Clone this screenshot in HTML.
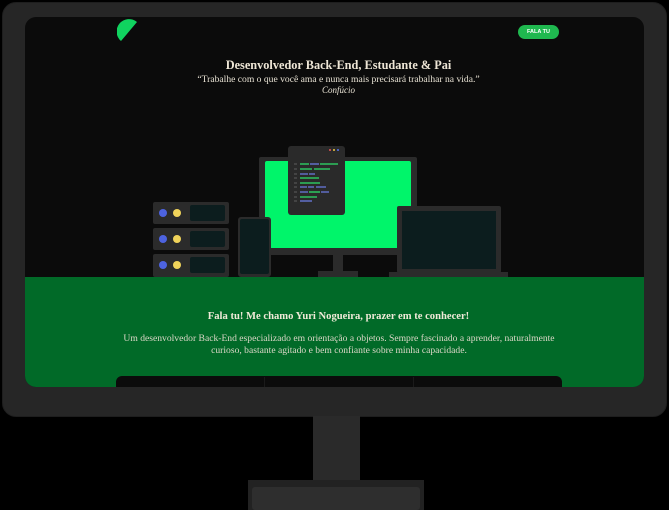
<!DOCTYPE html>
<html><head><meta charset="utf-8"><style>
*{margin:0;padding:0;box-sizing:border-box}
body{width:669px;height:510px;background:#000;position:relative;overflow:hidden;font-family:"Liberation Serif",serif}
.a{position:absolute}
</style></head><body>
<div class="a" style="left:2px;top:2px;width:665px;height:415px;background:#262626;border-radius:14px;border:1px solid #1e1e1e"></div>
<div class="a" style="left:313px;top:416px;width:47px;height:70px;background:#2a2a2a"></div>
<div class="a" style="left:248px;top:480px;width:176px;height:30px;background:#222"></div>
<div class="a" style="left:252px;top:487px;width:168px;height:23px;background:#2e2e2e;border-radius:3px"></div>
<div class="a" style="left:25px;top:17px;width:619px;height:370px;background:#0b0b0b;border-radius:11px;overflow:hidden">
 <div class="a" style="left:0;top:260px;width:619px;height:110px;background:#016a28"></div>
 <svg class="a" style="left:92px;top:2px" width="24" height="24" viewBox="0 0 24 24"><path d="M20 3 A10.5 10.5 0 0 0 4 22 Z" fill="#10d35f"/></svg>
 <div class="a" style="left:493px;top:8px;width:41px;height:14px;background:#1fb84f;border-radius:7px;color:#fff;font:bold 5.5px 'Liberation Sans',sans-serif;text-align:center;line-height:14px">FALA TU</div>
 <div class="a" style="left:0;top:41px;width:627px;text-align:center;color:#eee6d6;font-weight:bold;font-size:12.3px">Desenvolvedor Back-End, Estudante &amp; Pai</div>
 <div class="a" style="left:0;top:57px;width:627px;text-align:center;color:#e8e2d4;font-size:9.6px">“Trabalhe com o que você ama e nunca mais precisará trabalhar na vida.”</div>
 <div class="a" style="left:0;top:68px;width:627px;text-align:center;color:#e8e2d4;font-size:9px;font-style:italic">Confúcio</div>
 <svg class="a" style="left:0;top:0" width="619" height="370">
  <g transform="translate(-25,-17)">
   <rect x="259" y="157" width="158" height="98" rx="2" fill="#2b2b2b"/>
   <rect x="265" y="161" width="146" height="87" rx="2" fill="#00f56a"/>
   <rect x="333" y="255" width="10" height="17" fill="#2b2b2b"/>
   <rect x="318" y="271" width="40" height="6" fill="#2b2b2b"/>
   <rect x="288" y="146" width="57" height="69" rx="3" fill="#2a2a2a"/>
   <circle cx="330" cy="150" r="1" fill="#e55"/><circle cx="334" cy="150" r="1" fill="#ec4"/><circle cx="338" cy="150" r="1" fill="#57e"/>
   <g stroke-width="1.3">
    <path d="M300 164h9M320 164h18" stroke="#2ee06a"/><path d="M310 164h9" stroke="#6a7be0"/>
    <path d="M300 169h12M314 169h16" stroke="#2ee06a"/>
    <path d="M300 174h8M309 174h6" stroke="#6a7be0"/>
    <path d="M300 178h19" stroke="#2ee06a"/>
    <path d="M300 183h20" stroke="#2ee06a"/>
    <path d="M300 187h7M308 187h6M316 187h10" stroke="#6a7be0"/>
    <path d="M300 192h8M321 192h8" stroke="#6a7be0"/><path d="M309 192h11" stroke="#2ee06a"/>
    <path d="M300 197h17" stroke="#2ee06a"/>
    <path d="M300 201h12" stroke="#6a7be0"/>
    <path d="M294 164h3M294 169h3M294 174h3M294 178h3M294 183h3M294 187h3M294 192h3M294 197h3M294 201h3" stroke="#555"/>
   </g>
   <g fill="#2b2b2b">
    <rect x="153" y="202" width="76" height="22" rx="2"/><rect x="153" y="228" width="76" height="22" rx="2"/><rect x="153" y="254" width="76" height="23" rx="2"/>
   </g>
   <g fill="#0c1d1e"><rect x="190" y="205" width="35" height="16" rx="2"/><rect x="190" y="231" width="35" height="16" rx="2"/><rect x="190" y="257" width="35" height="16" rx="2"/></g>
   <g fill="#4d63e0"><circle cx="163" cy="213" r="4"/><circle cx="163" cy="239" r="4"/><circle cx="163" cy="265" r="4"/></g>
   <g fill="#f0d35a"><circle cx="177" cy="213" r="4"/><circle cx="177" cy="239" r="4"/><circle cx="177" cy="265" r="4"/></g>
   <rect x="238" y="217" width="33" height="60" rx="3" fill="#2b2b2b"/>
   <rect x="240" y="219" width="29" height="55" rx="2" fill="#0c1d1e"/>
   <rect x="397" y="206" width="104" height="67" rx="2" fill="#2b2b2b"/>
   <rect x="402" y="211" width="94" height="58" fill="#0c1d1e"/>
   <rect x="389" y="272" width="119" height="5" fill="#2b2b2b"/>
  </g>
 </svg>
 <div class="a" style="left:0;top:294px;width:627px;text-align:center;color:#f0ead8;font-weight:bold;font-size:10.6px">Fala tu! Me chamo Yuri Nogueira, prazer em te conhecer!</div>
 <div class="a" style="left:64px;top:316px;width:500px;text-align:center;color:#ddd8c8;font-size:9.6px;line-height:11.5px">Um desenvolvedor Back-End especializado em orientação a objetos. Sempre fascinado a aprender, naturalmente<br>curioso, bastante agitado e bem confiante sobre minha capacidade.</div>
 <div class="a" style="left:91px;top:359px;width:446px;height:20px;background:#0b0b0b;border-radius:6px"></div>
 <div class="a" style="left:239px;top:360px;width:1px;height:10px;background:#1a1a1a"></div>
 <div class="a" style="left:388px;top:360px;width:1px;height:10px;background:#1a1a1a"></div>
</div>
</body></html>
